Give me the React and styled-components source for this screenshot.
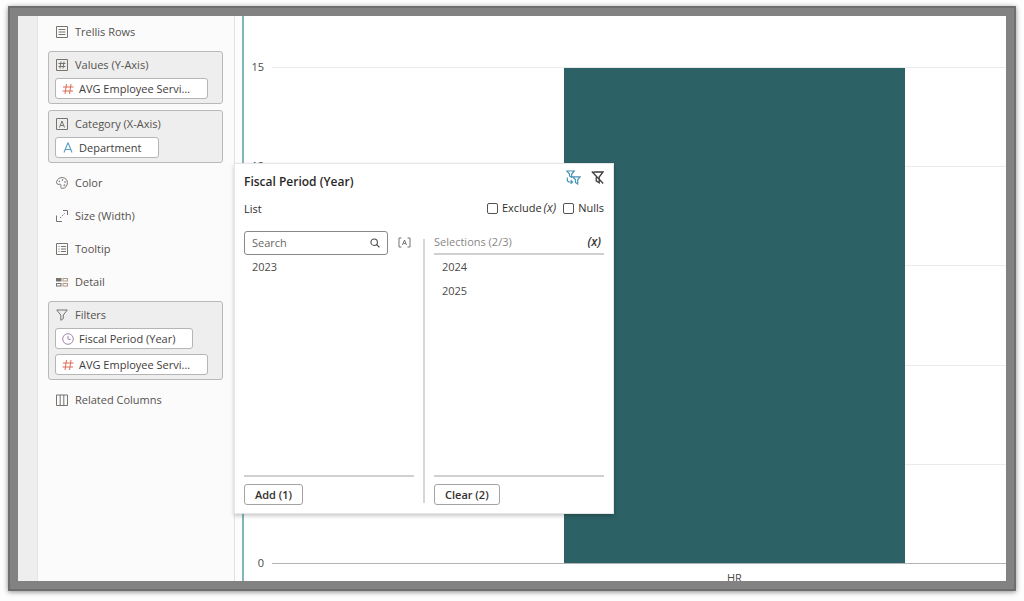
import React from "react";
import styled, { createGlobalStyle } from "styled-components";

const GlobalStyle = createGlobalStyle`
  *, *::before, *::after { box-sizing: border-box; }
  html, body { margin: 0; background: #fdfdfd; }
  body, button, input {
    font-family: "Open Sans", "Noto Sans", sans-serif;
    font-size: 11px;
    line-height: 16px;
    color: #4c4a48;
  }
  button { padding: 0; border: 0; background: none; cursor: pointer; }
`;

const Page = styled.main`
  height: 100vh;
  min-height: 560px;
  padding: 6px 8px 10px;
`;

const Frame = styled.div`
  position: relative;
  display: flex;
  height: 100%;
  padding: 8px;
  overflow: hidden;
  background: #828282;
  border: 2px solid #6e6e6e;
  box-shadow: 0 1px 5px rgba(0, 0, 0, 0.45);
`;

const Rail = styled.div`
  flex: none;
  width: 20px;
  background: #eeeeee;
  border-right: 1px solid #e4e4e4;
`;

const Sidebar = styled.aside`
  flex: none;
  display: flex;
  flex-direction: column;
  gap: 6px;
  width: 196px;
  padding: 2px 11px 0 10px;
  background: #fbfbfb;
`;

const Heading = styled.div`
  display: flex;
  align-items: center;
  gap: 7px;
  height: ${(p) => (p.$inCard ? 26 : 27)}px;
  padding-left: ${(p) => (p.$inCard ? 1 : 8)}px;
  color: #55524f;

  svg { flex: none; color: #77736f; }
`;

const Card = styled.section`
  padding: 0 6px 4px;
  background: #eeeeee;
  border: 1px solid #b9b9b9;
  border-radius: 3px;
`;

const Pills = styled.div`
  display: flex;
  flex-direction: column;
  align-items: flex-start;
  gap: 5px;
`;

const Pill = styled.button`
  display: flex;
  align-items: center;
  gap: 5px;
  height: 21px;
  padding: 0 17px 0 6px;
  background: #fff;
  border: 1px solid #b5b5b5;
  border-radius: 3px;
  color: #3f3d3b;
  white-space: nowrap;

  svg { flex: none; }
`;

const Canvas = styled.section`
  flex: 1;
  display: flex;
  min-width: 0;
  padding-left: 7px;
  background: #fdfdfd;
  border-left: 1px solid #e2e2e2;
`;

const Chart = styled.div`
  flex: 1;
  display: grid;
  grid-template-columns: 28px 1fr;
  grid-template-rows: 1fr 17px;
  min-width: 0;
  padding-top: 51px;
  overflow: hidden;
  background: #fff;
  border-left: 2px solid #82b7ba;
`;

const Ticks = styled.div`
  display: flex;
  flex-direction: column;
  padding-right: 8px;
  text-align: right;
  color: #4a4a4a;
`;

const Tick = styled.div`
  flex: ${(p) => (p.$last ? "0 0 1px" : "1 1 0")};
  height: 0;

  span { display: block; margin-top: -8px; }
`;

const Plot = styled.div`
  display: grid;
  border-bottom: 1px solid #b4b4b4;
`;

const GridLines = styled.div`
  grid-area: 1 / 1;
  display: flex;
  flex-direction: column;
`;

const GridLine = styled.div`
  flex: 1;
  border-top: 1px solid #ebebeb;
`;

const Bar = styled.div`
  grid-area: 1 / 1;
  width: 46.4%;
  margin: 1px 0 0 39.8%;
  background: #2c6165;
`;

const CategoryLabel = styled.div`
  grid-column: 2;
  width: 46.4%;
  height: 17px;
  margin-left: 39.8%;
  padding-top: 6px;
  text-align: center;
  overflow: hidden;
`;

const Popup = styled.section`
  position: absolute;
  left: 224px;
  top: 155px;
  display: flex;
  flex-direction: column;
  width: 380px;
  height: 351px;
  padding: 9px 9px 8px;
  background: #fff;
  border: 1px solid #e6e6e6;
  box-shadow: 0 2px 4px rgba(0, 0, 0, 0.22);
`;

const Row = styled.div`
  display: flex;
  align-items: center;
  justify-content: space-between;
`;

const TitleRow = styled(Row)`
  align-items: flex-start;
  height: 26px;
`;

const Title = styled.h2`
  margin: 0;
  font-size: 12px;
  font-weight: 600;
  line-height: 18px;
  color: #2b2928;
`;

const Tools = styled.div`
  display: flex;
  gap: 10px;
  margin-top: -3px;

  button, svg { display: block; }
`;

const OptionRow = styled(Row)`
  height: 20px;
  margin-bottom: 12px;
  color: #2f2d2b;
`;

const Options = styled.div`
  display: flex;
  align-items: center;
  gap: 7px;
  margin-top: -2px;
`;

const Check = styled.label`
  display: flex;
  align-items: center;
  gap: 4px;

  input {
    appearance: none;
    width: 11px;
    height: 11px;
    margin: 0;
    border: 1px solid #55524f;
    border-radius: 2px;
    background: #fff;
  }
`;

const Variable = styled.button`
  font-size: 12px;
  font-style: italic;
  color: #3a3836;
  font-weight: ${(p) => (p.$strong ? 600 : 400)};
`;

const Pair = styled.div`
  display: flex;
  align-items: center;
  gap: 2px;
`;

const Columns = styled.div`
  flex: 1;
  display: grid;
  grid-template-columns: minmax(0, 1fr) 2px minmax(0, 1fr);
  gap: 9px;
`;

const Column = styled.div`
  display: flex;
  flex-direction: column;
`;

const Divider = styled.div`
  margin: 8px 0 2px;
  background: #d6d6d6;
`;

const SearchRow = styled.div`
  display: flex;
  align-items: center;
  gap: 10px;
  height: 24px;
  padding-right: 3px;

  svg { display: block; }
`;

const SearchBox = styled.label`
  display: flex;
  align-items: center;
  flex: 1;
  min-width: 0;
  height: 24px;
  padding: 0 7px;
  border: 1px solid #8b8987;
  border-radius: 3px;

  input {
    flex: 1;
    min-width: 0;
    padding: 0;
    border: 0;
    outline: 0;
    background: none;
  }
  input::placeholder { color: #6a6764; opacity: 1; }
`;

const SelectionHeader = styled(Row)`
  height: 24px;
  padding-right: 3px;
  border-bottom: 2px solid #d0d0d0;
  color: #8a8785;
`;

const List = styled.ul`
  flex: 1;
  margin: 0;
  padding: 0;
  list-style: none;
  border-bottom: 2px solid #d0d0d0;

  li { height: 24px; padding-left: 8px; line-height: 24px; }
`;

const ActionButton = styled.button`
  align-self: flex-start;
  height: 21px;
  margin-top: 7px;
  padding: 0 10px;
  border: 1px solid #a5a3a1;
  border-radius: 3px;
  background: #fff;
  font-weight: 600;
  color: #33312f;
`;

const Icon = ({ size = 12, color = "currentColor", children }) => (
  <svg width={size} height={size} viewBox="0 0 12 12" fill="none" stroke={color} strokeWidth="1" aria-hidden="true">
    {children}
  </svg>
);

const RowsIcon = () => (
  <Icon><path d="M.5.5h11v11H.5zM2.5 3.5h7M2.5 6h7M2.5 8.5h7" /></Icon>
);
const ValuesIcon = () => (
  <Icon><path d="M.5.5h11v11H.5zM5 2.5l-1 7M8 2.5l-1 7M2.5 4.5h7M2.5 7.5h7" /></Icon>
);
const CategoryIcon = () => (
  <Icon><path d="M.5.5h11v11H.5zM3.5 9.5 6 3l2.500 6.500M4.300 7.500h3.400" /></Icon>
);
const PaletteIcon = () => (
  <Icon>
    <path d="M.7 4.500C1.300 2 3.600.6 6.200.6c3 0 5.200 2.200 5.200 5.100 0 3.200-2.300 5.700-4.900 5.700-1.700 0-2-1.100-1.600-2.200.5-1.300-.2-2.300-1.600-1.900C1.500 7.800.2 6.600.7 4.500z" />
    <circle cx="3.400" cy="4.300" r=".4" /><circle cx="6.400" cy="3" r=".4" />
    <circle cx="9" cy="5" r=".4" /><circle cx="8.300" cy="8.200" r=".5" />
  </Icon>
);
const SizeIcon = () => (
  <Icon><path d="M.5 5.500v6H6M7 .5h4.500V5" /><path d="M4 8l5-5" strokeDasharray="1.400 1.200" /></Icon>
);
const TooltipIcon = () => (
  <Icon><path d="M.5.500h11v11H.5zM2.500 3.500h1M2.500 6h1M2.500 8.500h1M5 3.500h5M5 6h5M5 8.500h5" /></Icon>
);
const DetailIcon = () => (
  <Icon>
    <rect x=".5" y="2.500" width="4.500" height="2.500" fill="currentColor" />
    <rect x="7" y="2.500" width="4.500" height="2.500" stroke="#b09a86" />
    <rect x=".5" y="7.500" width="4.500" height="2.500" />
    <rect x="7" y="7.500" width="4.500" height="2.500" stroke="#b09a86" />
  </Icon>
);
const FilterIcon = () => (
  <Icon><path d="M.7 1h10.600L7.300 6v3.600L4.800 11.300V6z" /></Icon>
);
const ColumnsIcon = () => (
  <Icon><path d="M.5 1h11v10.500H.5zM4.200 1v10.500M7.800 1v10.500" /></Icon>
);
const HashIcon = () => (
  <Icon color="#de6a55"><path d="M4.500 1 3 11M9 1 7.500 11M1 4h10.500M.5 8H11" /></Icon>
);
const TextIcon = () => (
  <Icon color="#5a9cc0"><path d="M2 10.500 5.800 1h.4L10 10.500M3.300 7.500h5.400" strokeWidth="1.100" /></Icon>
);
const ClockIcon = () => (
  <Icon color="#a084b0"><circle cx="6" cy="6" r="5.300" /><path d="M6 2.800V6.300h2.700" /></Icon>
);
const SearchIcon = () => (
  <Icon size={10} color="#4c4a48"><circle cx="5" cy="5" r="3.900" strokeWidth="1.300" /><path d="m8 8 3.300 3.300" strokeWidth="1.500" /></Icon>
);
const MatchCaseIcon = () => (
  <svg width="13" height="12" viewBox="0 0 13 12" fill="none" stroke="#77736f" aria-hidden="true">
    <path d="M3.500 1H1v9h2.500M9.500 1H12v9H9.500M4.500 8l2-5 2 5M5.300 6.400h2.400" />
  </svg>
);
const LinkedFiltersIcon = () => (
  <svg width="15" height="15" viewBox="0 0 15 15" fill="none" stroke="#4693b5" strokeWidth="1.200" aria-hidden="true">
    <path d="M.8 1h7.400L5.700 4v3.200L3.500 6V4zM6.800 6.800h7.400L11.700 9.800v4.200L9.500 12.500V9.800zM1.300 7.500v2.300c0 1.400.8 2.200 2.300 2.200h2.600M4.700 10.200l1.800 1.800-1.800 1.800" />
  </svg>
);
const FilterOffIcon = () => (
  <svg width="13" height="15" viewBox="0 0 13 15" fill="none" stroke="#3f3d3b" aria-hidden="true">
    <path d="M2.500 2H12L8.200 7v5.700L5.200 10.800V7.200M.8 1.500l11.400 12" strokeWidth="1.300" />
  </svg>
);

const Property = ({ icon, label }) => (
  <Heading>{icon}<span>{label}</span></Heading>
);

const PropertyCard = ({ icon, label, children }) => (
  <Card>
    <Heading $inCard>{icon}<span>{label}</span></Heading>
    <Pills>{children}</Pills>
  </Card>
);

const ticks = [15, 12, 9, 6, 3];

export default function App() {
  return (
    <>
      <GlobalStyle />
      <Page>
        <Frame>
          <Rail />
          <Sidebar>
            <Property icon={<RowsIcon />} label="Trellis Rows" />
            <PropertyCard icon={<ValuesIcon />} label="Values (Y-Axis)">
              <Pill><HashIcon />AVG Employee Servi…</Pill>
            </PropertyCard>
            <PropertyCard icon={<CategoryIcon />} label="Category (X-Axis)">
              <Pill><TextIcon />Department</Pill>
            </PropertyCard>
            <Property icon={<PaletteIcon />} label="Color" />
            <Property icon={<SizeIcon />} label="Size (Width)" />
            <Property icon={<TooltipIcon />} label="Tooltip" />
            <Property icon={<DetailIcon />} label="Detail" />
            <PropertyCard icon={<FilterIcon />} label="Filters">
              <Pill><ClockIcon />Fiscal Period (Year)</Pill>
              <Pill><HashIcon />AVG Employee Servi…</Pill>
            </PropertyCard>
            <Property icon={<ColumnsIcon />} label="Related Columns" />
          </Sidebar>
          <Canvas>
            <Chart>
              <Ticks>
                {ticks.map((t) => <Tick key={t}><span>{t}</span></Tick>)}
                <Tick $last><span>0</span></Tick>
              </Ticks>
              <Plot>
                <GridLines>{ticks.map((t) => <GridLine key={t} />)}</GridLines>
                <Bar />
              </Plot>
              <CategoryLabel>HR</CategoryLabel>
            </Chart>
          </Canvas>

          <Popup aria-label="Fiscal Period (Year) filter">
            <TitleRow>
              <Title>Fiscal Period (Year)</Title>
              <Tools>
                <button aria-label="Limit values by filters"><LinkedFiltersIcon /></button>
                <button aria-label="Disable filter"><FilterOffIcon /></button>
              </Tools>
            </TitleRow>
            <OptionRow>
              <span>List</span>
              <Options>
                <Pair>
                  <Check><input type="checkbox" />Exclude</Check>
                  <Variable>(x)</Variable>
                </Pair>
                <Check><input type="checkbox" />Nulls</Check>
              </Options>
            </OptionRow>
            <Columns>
              <Column>
                <SearchRow>
                  <SearchBox>
                    <input type="text" placeholder="Search" aria-label="Search" />
                    <SearchIcon />
                  </SearchBox>
                  <button aria-label="Match case"><MatchCaseIcon /></button>
                </SearchRow>
                <List><li>2023</li></List>
                <ActionButton>Add (1)</ActionButton>
              </Column>
              <Divider />
              <Column>
                <SelectionHeader>
                  <span>Selections (2/3)</span>
                  <Variable $strong>(x)</Variable>
                </SelectionHeader>
                <List><li>2024</li><li>2025</li></List>
                <ActionButton>Clear (2)</ActionButton>
              </Column>
            </Columns>
          </Popup>
        </Frame>
      </Page>
    </>
  );
}
